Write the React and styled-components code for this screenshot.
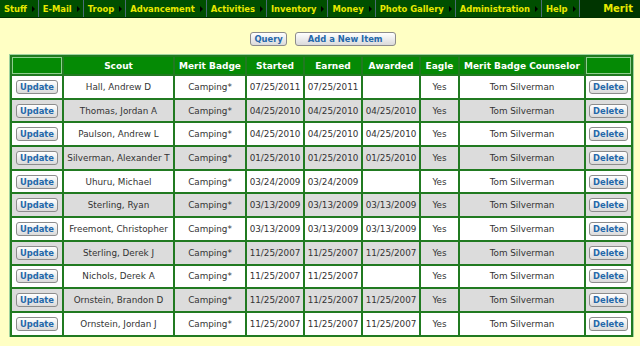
import styled, { createGlobalStyle } from "styled-components";

const GlobalStyle = createGlobalStyle`
   body{
      margin: 0;
      background: #ffffc4;
      font-family: "DejaVu Sans", Verdana, sans-serif;
      font-size: 9px;
   }
`

const NavBar = styled.div`
   display: flex;
   height: 17px;
   background: #004f00;
   border-bottom: 1px solid #003000;
   align-items: stretch;
`
const NavItem = styled.div`
   display: flex;
   align-items: center;
   gap: 5px;
   padding: 0 3px 0 4px;
   border-right: 1px solid #4b6d78;
   color: #e8e800;
   font-weight: bold;
   font-size: 8.4px;
   white-space: nowrap;
   &::after{
      content: "";
      border-left: 3px solid #000;
      border-top: 3px solid transparent;
      border-bottom: 3px solid transparent;
   }
`
const NavTitle = styled.div`
   flex: 1;
   display: flex;
   align-items: center;
   justify-content: flex-end;
   padding-right: 7px;
   background: #003500;
   color: #e8e800;
   font-weight: bold;
   font-size: 10px;
`
const Toolbar = styled.div`
   display: flex;
   justify-content: center;
   gap: 8px;
   margin: 14px 0 9px 6px;
`
const Btn = styled.button`
   font-family: inherit;
   font-size: 8.4px;
   font-weight: bold;
   color: #2468aa;
   height: 14px;
   padding: 0 ${props => props.$wide ? "12px" : "3px"};
   border: 1px solid #8c8c8c;
   border-radius: 3px;
   background: linear-gradient(#ffffff, #dadada);
   line-height: 12px;
   cursor: pointer;
`
const Table = styled.table`
   margin-left: 10px;
   width: 623px;
   table-layout: fixed;
   border-collapse: collapse;
   border: 2px solid #217a21;
   box-shadow: 0 0 0 1px #9fd39f;
`
const Th = styled.th`
   height: 17px;
   padding: 0;
   background: #058a05;
   color: #ffffff;
   font-weight: bold;
   border: 2px solid #217a21;
   box-shadow: ${props => props.$blank ? "inset 0 0 0 1px #8fce8f" : "none"};
   white-space: nowrap;
`
const Tr = styled.tr`
   background: ${props => props.$odd ? "#dcdcdc" : "#ffffff"};
`
const Td = styled.td`
   height: 21.7px;
   padding: 0;
   text-align: center;
   color: #333333;
   font-size: 8.8px;
   border: 2px solid #217a21;
   white-space: nowrap;
`

const navItems = ["Stuff", "E-Mail", "Troop", "Advancement", "Activities", "Inventory", "Money", "Photo Gallery", "Administration", "Help"]

const widths = [52, 111, 72, 58, 58, 58, 39, 126, 47]

const rows = [
   ["Hall, Andrew D", "07/25/2011", "07/25/2011", ""],
   ["Thomas, Jordan A", "04/25/2010", "04/25/2010", "04/25/2010"],
   ["Paulson, Andrew L", "04/25/2010", "04/25/2010", "04/25/2010"],
   ["Silverman, Alexander T", "01/25/2010", "01/25/2010", "01/25/2010"],
   ["Uhuru, Michael", "03/24/2009", "03/24/2009", ""],
   ["Sterling, Ryan", "03/13/2009", "03/13/2009", "03/13/2009"],
   ["Freemont, Christopher", "03/13/2009", "03/13/2009", "03/13/2009"],
   ["Sterling, Derek J", "11/25/2007", "11/25/2007", "11/25/2007"],
   ["Nichols, Derek A", "11/25/2007", "11/25/2007", ""],
   ["Ornstein, Brandon D", "11/25/2007", "11/25/2007", "11/25/2007"],
   ["Ornstein, Jordan J", "11/25/2007", "11/25/2007", "11/25/2007"],
]

export default function App() {
   return (
      <>
         <GlobalStyle />
         <NavBar>
            {navItems.map(item => <NavItem key={item}>{item}</NavItem>)}
            <NavTitle>Merit</NavTitle>
         </NavBar>

         <Toolbar>
            <Btn>Query</Btn>
            <Btn $wide>Add a New Item</Btn>
         </Toolbar>

         <Table>
            <colgroup>
               {widths.map((w, i) => <col key={i} style={{ width: w }} />)}
            </colgroup>
            <thead>
               <tr>
                  <Th $blank></Th>
                  <Th>Scout</Th>
                  <Th>Merit Badge</Th>
                  <Th>Started</Th>
                  <Th>Earned</Th>
                  <Th>Awarded</Th>
                  <Th>Eagle</Th>
                  <Th>Merit Badge Counselor</Th>
                  <Th $blank></Th>
               </tr>
            </thead>
            <tbody>
               {rows.map((r, i) => (
                  <Tr key={i} $odd={i % 2 === 1}>
                     <Td><Btn>Update</Btn></Td>
                     <Td>{r[0]}</Td>
                     <Td>Camping*</Td>
                     <Td>{r[1]}</Td>
                     <Td>{r[2]}</Td>
                     <Td>{r[3]}</Td>
                     <Td>Yes</Td>
                     <Td>Tom Silverman</Td>
                     <Td><Btn>Delete</Btn></Td>
                  </Tr>
               ))}
            </tbody>
         </Table>
      </>
   );
}
